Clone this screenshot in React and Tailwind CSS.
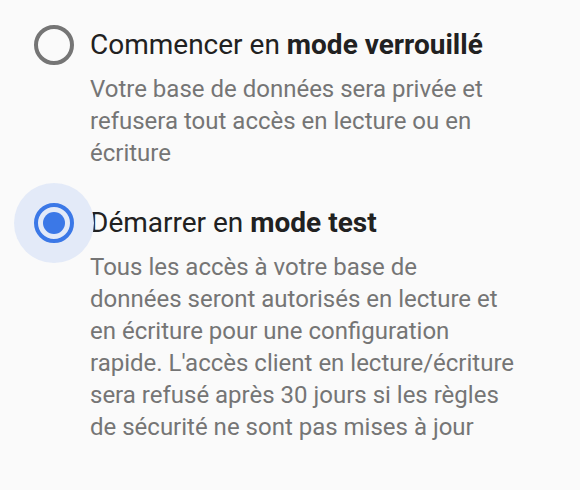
import React, { useState } from "react";

// line breaks follow the original layout
const options = [
  {
    id: "locked",
    prefix: "Commencer en ",
    bold: "mode verrouillé",
    desc: "Votre base de données sera privée et\nrefusera tout accès en lecture ou en\nécriture",
  },
  {
    id: "test",
    prefix: "Démarrer en ",
    bold: "mode test",
    desc: "Tous les accès à votre base de\ndonnées seront autorisés en lecture et\nen écriture pour une configuration\nrapide. L'accès client en lecture/écriture\nsera refusé après 30 jours si les règles\nde sécurité ne sont pas mises à jour",
  },
];

const Radio = ({ checked }) => (
  <div className="relative w-10 h-10 shrink-0">
    {checked && (
      <div className="absolute -inset-5 rounded-full bg-[#e3eaf8]" />
    )}
    <div
      className={`relative w-10 h-10 rounded-full border-4 flex items-center justify-center ${
        checked ? "border-[#3b78e7]" : "border-[#757575]"
      }`}
    >
      {checked && <div className="w-[22px] h-[22px] rounded-full bg-[#3b78e7]" />}
    </div>
  </div>
);

const App = () => {
  const [selected, setSelected] = useState("test");

  return (
    <div
      className="w-[580px] h-[490px] bg-[#fafafa] pl-[34px] pt-[25px] flex flex-col gap-[34px]"
      style={{ fontFamily: "Roboto, sans-serif" }}
    >
      {options.map((opt) => (
        <div
          key={opt.id}
          className="flex gap-4 cursor-pointer"
          onClick={() => setSelected(opt.id)}
        >
          <Radio checked={selected === opt.id} />
          <div className="flex flex-col w-[440px]">
            <div className="text-[28px] leading-10 text-[#212121]">
              {opt.prefix}
              <span className="font-bold">{opt.bold}</span>
            </div>
            <p className="text-[24px] leading-8 text-[#757575] mt-2 whitespace-pre-line">
              {opt.desc}
            </p>
          </div>
        </div>
      ))}
    </div>
  );
};

export default App;
